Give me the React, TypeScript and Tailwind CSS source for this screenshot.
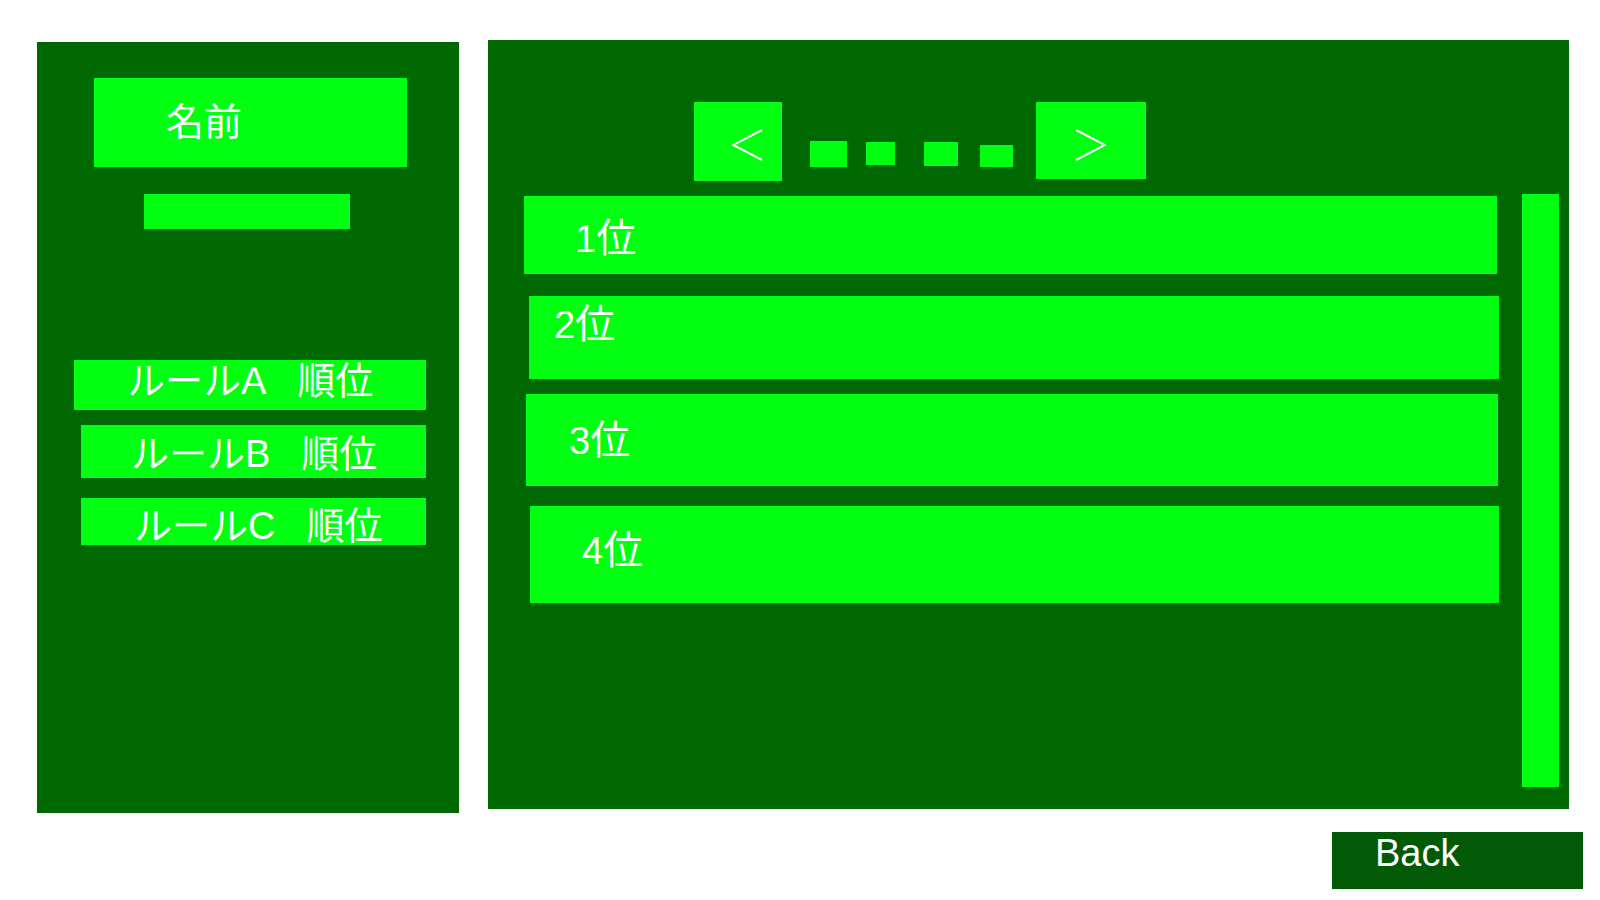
const font = "font-['Liberation_Sans','Noto_Sans_CJK_JP',sans-serif]"

function Chevron({ dir }: { dir: "left" | "right" }) {
  return (
    <svg width="31" height="32" viewBox="0 0 31 32" fill="none">
      {dir === "left" ? (
        <polyline points="30,1 1,16 30,31" stroke="white" strokeWidth="2" />
      ) : (
        <polyline points="1,1 30,16 1,31" stroke="white" strokeWidth="2" />
      )}
    </svg>
  )
}

const rules = [
  { label: "ルールA", box: "ml-[37px] w-[352px] h-[50px] pt-[2px] pl-[53px]" },
  { label: "ルールB", box: "ml-[44px] w-[345px] h-[53px] pt-[10px] pl-[50px] mt-[15px]" },
  { label: "ルールC", box: "ml-[44px] w-[345px] h-[47px] pt-[9px] pl-[53px] mt-[20px]" },
]

const ranks = [
  { num: "1", box: "ml-0 w-[973px] h-[78px] pt-[23px] pl-[51px]" },
  { num: "2", box: "ml-[5px] w-[970px] h-[83px] pt-[9px] pl-[25px] mt-[22px]" },
  { num: "3", box: "ml-[2px] w-[972px] h-[92px] pt-[27px] pl-[43px] mt-[15px]" },
  { num: "4", box: "ml-[6px] w-[969px] h-[97px] pt-[25px] pl-[52px] mt-[20px]" },
]

export default function App() {
  return (
    <div className={`w-[1600px] h-[900px] bg-white text-white ${font}`}>
      <div className="flex items-start pt-[40px] pl-[37px]">
        {/* profile panel */}
        <div className="mt-[2px] w-[422px] h-[771px] bg-[#006800] flex flex-col items-start">
          <div className="ml-[57px] mt-[36px] w-[313px] h-[89px] bg-[#00ff10] pt-[25px] pl-[72px] text-[38px] leading-[38px]">
            名前
          </div>
          <div className="ml-[107px] mt-[27px] w-[206px] h-[35px] bg-[#00ff10]" />
          <div className="mt-[131px] flex flex-col items-start">
            {rules.map((r) => (
              <div key={r.label} className={`${r.box} bg-[#00ff10] text-[38px] leading-[38px] whitespace-nowrap`}>
                {r.label}
                <span className="ml-[31px]">順位</span>
              </div>
            ))}
          </div>
        </div>

        {/* ranking panel */}
        <div className="ml-[29px] w-[1081px] h-[769px] bg-[#006800] flex flex-col items-start">
          <div className="flex items-start ml-[206px] mt-[62px]">
            <button className="w-[88px] h-[79px] bg-[#00ff10] flex items-start pl-[38px] pt-[27px]">
              <Chevron dir="left" />
            </button>
            <div className="ml-[28px] mt-[39px] w-[37px] h-[26px] bg-[#00ff10]" />
            <div className="ml-[19px] mt-[40px] w-[29px] h-[23px] bg-[#00ff10]" />
            <div className="ml-[29px] mt-[40px] w-[34px] h-[24px] bg-[#00ff10]" />
            <div className="ml-[22px] mt-[43px] w-[33px] h-[22px] bg-[#00ff10]" />
            <button className="ml-[23px] w-[110px] h-[77px] bg-[#00ff10] flex items-start pl-[39px] pt-[27px]">
              <Chevron dir="right" />
            </button>
          </div>

          <div className="flex items-start mt-[13px] ml-[36px]">
            <div className="mt-[2px] w-[975px] flex flex-col items-start">
              {ranks.map((r) => (
                <div key={r.num} className={`${r.box} bg-[#00ff10] text-[38px] leading-[38px]`}>
                  {r.num}
                  <span className="text-[40px]">位</span>
                </div>
              ))}
            </div>
            <div className="ml-[23px] w-[37px] h-[593px] bg-[#00ff10]" />
          </div>
        </div>
      </div>

      <div className="flex justify-end pr-[17px] mt-[19px]">
        <button className="w-[251px] h-[57px] bg-[#035a06] text-left pl-[43px] pt-[2px] text-[38px] leading-[38px] self-start flex items-start">
          Back
        </button>
      </div>
    </div>
  )
}
